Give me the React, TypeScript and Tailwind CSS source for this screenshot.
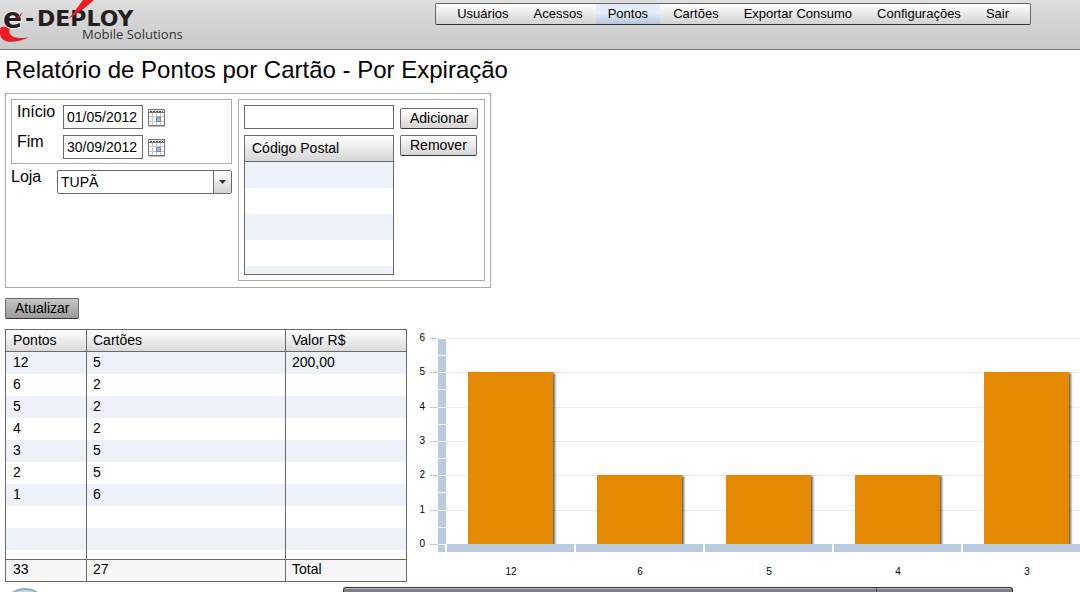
import React from 'react';

interface MenuItem {
  label: string;
  active?: boolean;
}

interface PointsRow {
  pontos: string;
  cartoes: string;
  valor: string;
}

const menuItems: MenuItem[] = [
  { label: 'Usuários' },
  { label: 'Acessos' },
  { label: 'Pontos', active: true },
  { label: 'Cartões' },
  { label: 'Exportar Consumo' },
  { label: 'Configurações' },
  { label: 'Sair' },
];

const rows: PointsRow[] = [
  { pontos: '12', cartoes: '5', valor: '200,00' },
  { pontos: '6', cartoes: '2', valor: '' },
  { pontos: '5', cartoes: '2', valor: '' },
  { pontos: '4', cartoes: '2', valor: '' },
  { pontos: '3', cartoes: '5', valor: '' },
  { pontos: '2', cartoes: '5', valor: '' },
  { pontos: '1', cartoes: '6', valor: '' },
  { pontos: '', cartoes: '', valor: '' },
  { pontos: '', cartoes: '', valor: '' },
];

const bars = [
  { label: '12', value: 5 },
  { label: '6', value: 2 },
  { label: '5', value: 2 },
  { label: '4', value: 2 },
  { label: '3', value: 5 },
];

const Logo: React.FC = () => (
  <svg width="190" height="49" viewBox="0 0 190 49" role="img" aria-label="e-Deploy Mobile Solutions">
    <path d="M1 27 C-1 32 0 37 3 39.5 C8 43.5 18 42 29 37.5 C20 38.5 12 38 10 34 C8.5 31 9.5 29 12 26 Z" fill="#ed1c24" />
    <text x="3" y="28" fontFamily="DejaVu Sans" fontWeight="bold" fontSize="28" fill="#231f20" stroke="#eee" strokeWidth="2" paintOrder="stroke">
      e
    </text>
    <path d="M15 19 L23 12 L20 17 Z" fill="#ed1c24" />
    <text x="25" y="26" fontFamily="DejaVu Sans" fontWeight="bold" fontSize="22" fill="#231f20">
      -
    </text>
    <text x="37" y="26" fontFamily="DejaVu Sans" fontWeight="bold" fontSize="22" fill="#231f20">
      DEPLOY
    </text>
    <path d="M83 0 L94 0 C86 7 80 12 68 19 C74 13 77 8 83 0 Z" fill="#ed1c24" />
    <text x="82" y="39" fontFamily="Open Sans" fontSize="13" fill="#333">
      Mobile Solutions
    </text>
  </svg>
);

const CalendarIcon: React.FC = () => (
  <svg width="19" height="20" viewBox="0 0 19 20" aria-hidden="true" shapeRendering="crispEdges">
    <rect x="2" y="18" width="16" height="1" fill="#bbb" />
    <rect x="1.5" y="1.5" width="16" height="16" fill="#fff" stroke="#777" />
    <path d="M2 8.5h15M2 13.5h15M5.5 5v12M9.5 5v12M13.5 5v12" stroke="#c8c8c8" fill="none" />
    <rect x="1.5" y="1.5" width="16" height="3" fill="#e4e4e4" stroke="#777" />
    <path d="M3 3h13" stroke="#444" strokeDasharray="2 1" />
    <rect x="9.5" y="9.5" width="4" height="4" fill="#9db9da" stroke="#6d8fb5" />
  </svg>
);

const DateField: React.FC<{ id: string; label: string; value: string }> = ({ id, label, value }) => (
  <div className="flex items-start">
    <label htmlFor={id} className="w-[46px] text-base leading-[14px]">
      {label}
    </label>
    <input
      id={id}
      type="text"
      defaultValue={value}
      className="h-6 w-20 border border-[#696969] bg-white px-[3px] text-sm"
    />
    <button type="button" aria-label={`Calendário ${label}`} className="ml-1 mt-[3px]">
      <CalendarIcon />
    </button>
  </div>
);

const FlexButton: React.FC<{ children: React.ReactNode; dark?: boolean }> = ({ children, dark }) => (
  <button
    type="button"
    className={`h-[21px] rounded-[2px] border border-[#6b6b6b] border-b-[#333] px-[9px] text-sm leading-[19px] ${
      dark ? 'bg-linear-to-b from-[#c6c6c6] to-[#9b9b9b]' : 'bg-linear-to-b from-white to-[#d4d4d4]'
    }`}
  >
    {children}
  </button>
);

const BAND = 129;
const STEP = 34.35;
const BASE = 215;

const BarChart: React.FC = () => (
  <svg className="block h-[253px] w-full" role="img" aria-label="Cartões por pontos" fontFamily="Liberation Sans, sans-serif" fontSize="10">
    <defs>
      <filter id="bar-shadow" x="-5%" y="-5%" width="115%" height="110%">
        <feDropShadow dx="2" dy="1" stdDeviation="1" floodColor="#000" floodOpacity="0.6" />
      </filter>
      <clipPath id="plot">
        <rect x="0" y="0" width="100%" height={BASE} />
      </clipPath>
    </defs>
    {[0, 1, 2, 3, 4, 5, 6].map((n) => {
      const y = Math.round(BASE - n * STEP);
      return (
        <g key={n}>
          <rect x="39" y={y} width="100%" height="1" fill="#ededed" />
          <rect x="23" y={y} width="8" height="1" fill="#b9cbdc" />
          <text x="18" y={y + 3} textAnchor="end">
            {n}
          </text>
        </g>
      );
    })}
    <rect x="31" y="10" width="8" height="213" fill="#b9cbdc" />
    {Array.from({ length: 12 }, (_, i) => (
      <rect key={i} x="31" y={Math.round(BASE - (i * STEP) / 2)} width="8" height="1" fill="#fff" />
    ))}
    <g clipPath="url(#plot)">
      {bars.map((bar, i) => (
        <rect
          key={bar.label}
          x={61 + i * BAND}
          y={Math.round(BASE - bar.value * STEP)}
          width="85"
          height={Math.round(bar.value * STEP) + 4}
          fill="#e48900"
          filter="url(#bar-shadow)"
        />
      ))}
    </g>
    <rect x="38" y={BASE} width="2" height="8" fill="#fff" />
    {bars.map((bar, i) => (
      <g key={bar.label}>
        <rect x={40 + i * BAND} y={BASE} width={BAND - 2} height="8" fill="#b9cbdc" />
        <text x={104 + i * BAND} y="246" textAnchor="middle">
          {bar.label}
        </text>
      </g>
    ))}
  </svg>
);

const App: React.FC = () => {
  return (
    <div className="flex min-h-screen flex-col overflow-hidden bg-white font-['Liberation_Sans',Arial,sans-serif] text-black">
      <header className="flex h-[50px] items-start justify-between border-b border-[#777] bg-linear-to-b from-[#dedede] to-[#c9c9c9]">
        <Logo />
        <nav className="mr-[49px] mt-[3px] flex h-[22px] gap-px rounded-[2px] border border-[#666] border-b-[#333] bg-linear-to-b from-white to-[#d2d2d2] px-[9px]">
          {menuItems.map((item) => (
            <a
              key={item.label}
              href="#"
              className={`px-3 text-[13px] leading-5 whitespace-nowrap ${
                item.active ? 'bg-linear-to-b from-[#e3ecf8] from-45% to-[#b5c6db]' : ''
              }`}
            >
              {item.label}
            </a>
          ))}
        </nav>
      </header>

      <main className="pl-[5px]">
        <h1 className="pt-[5px] text-2xl leading-[30px]">Relatório de Pontos por Cartão - Por Expiração</h1>

        <section className="mt-2 flex w-[486px] items-start gap-[6px] border border-[#aaa] p-[5px] pb-[6px]">
          <div className="flex w-[221px] flex-col gap-[6px]">
            <div className="flex flex-col gap-[6px] border border-[#aaa] p-[5px] pb-1">
              <DateField id="inicio" label="Início" value="01/05/2012" />
              <DateField id="fim" label="Fim" value="30/09/2012" />
            </div>
            <div className="flex items-start">
              <label htmlFor="loja" className="w-[46px] text-base leading-[14px]">
                Loja
              </label>
              <div className="relative flex-1">
                <select id="loja" className="block h-6 w-full appearance-none rounded-[2px] border border-[#696969] bg-white pl-[3px] text-sm">
                  <option>TUPÃ</option>
                </select>
                <span className="pointer-events-none absolute inset-y-px right-px flex w-[18px] items-center justify-center border-l border-[#696969] bg-linear-to-b from-white to-[#d4d4d4]">
                  <svg width="7" height="4" viewBox="0 0 7 4" aria-hidden="true">
                    <path d="M0 0h7L3.5 4z" fill="#333" />
                  </svg>
                </span>
              </div>
            </div>
          </div>

          <div className="flex flex-1 flex-col gap-[6px] border border-[#aaa] p-[5px]">
            <div className="flex items-end gap-[6px]">
              <input type="text" aria-label="Código Postal" className="h-6 w-[150px] border border-[#696969] bg-white px-1 text-sm" />
              <FlexButton>Adicionar</FlexButton>
            </div>
            <div className="flex items-start gap-[6px]">
              <div className="h-[140px] w-[150px] overflow-hidden border border-[#696969]">
                <table className="w-full border-separate border-spacing-0 text-sm">
                  <thead>
                    <tr className="bg-linear-to-b from-white to-[#d4d4d4]">
                      <th className="h-[26px] border-b border-[#696969] px-[7px] pt-0 pb-[2px] text-left font-normal">Código Postal</th>
                    </tr>
                  </thead>
                  <tbody>
                    {[0, 1, 2, 3, 4].map((n) => (
                      <tr key={n} className="odd:bg-[#edf2fa]">
                        <td className="h-[26px] p-0"></td>
                      </tr>
                    ))}
                  </tbody>
                </table>
              </div>
              <FlexButton>Remover</FlexButton>
            </div>
          </div>
        </section>

        <div className="mt-[10px] flex">
          <FlexButton dark>Atualizar</FlexButton>
        </div>

        <section className="mt-[10px] flex items-start">
          <table className="w-[402px] shrink-0 table-fixed border-separate border-spacing-0 border border-[#696969] text-sm leading-[18px]">
            <thead>
              <tr className="bg-linear-to-b from-white to-[#d8d8d8]">
                <th className="h-[22px] w-[81px] border-r border-b border-[#696969] px-[7px] pt-0 pb-[2px] text-left font-normal">Pontos</th>
                <th className="w-[199px] border-r border-b border-[#696969] px-[6px] pt-0 pb-[2px] text-left font-normal">Cartões</th>
                <th className="border-b border-[#696969] px-[6px] pt-0 pb-[2px] text-left font-normal">Valor R$</th>
              </tr>
            </thead>
            <tbody>
              {rows.map((row, i) => (
                <tr key={i} className="odd:bg-[#edf2fa]">
                  <td className="h-[22px] border-r border-[#696969] px-[7px] pt-0 pb-[2px]">{row.pontos}</td>
                  <td className="border-r border-[#696969] px-[6px] pt-0 pb-[2px]">{row.cartoes}</td>
                  <td className="px-[6px] pt-0 pb-[2px]">{row.valor}</td>
                </tr>
              ))}
              <tr>
                <td className="h-[9px] border-r border-[#696969] p-0"></td>
                <td className="border-r border-[#696969] p-0"></td>
                <td className="p-0"></td>
              </tr>
            </tbody>
            <tfoot>
              <tr className="bg-[#f7f7f7]">
                <td className="h-[22px] border-t border-r border-[#696969] px-[7px] pt-0 pb-[3px]">33</td>
                <td className="border-t border-r border-[#696969] px-[6px] pt-0 pb-[3px]">27</td>
                <td className="border-t border-[#696969] px-[6px] pt-0 pb-[3px]">Total</td>
              </tr>
            </tfoot>
          </table>
          <div className="min-w-0 flex-1">
            <BarChart />
          </div>
        </section>
      </main>

      <footer className="mt-auto flex items-end">
        <svg className="ml-[10px]" width="30" height="5" viewBox="0 0 30 5" aria-hidden="true">
          <circle cx="15" cy="24" r="22" fill="#c3d7e6" stroke="#8fb0c8" strokeWidth="2" />
        </svg>
        <div className="mr-[67px] ml-[303px] flex h-[5px] flex-1 rounded-t-[3px] border-x border-t border-[#333] bg-linear-to-b from-[#b5b7bb] from-25% to-[#7d8088] to-25%">
          <span className="w-[533px] border-r border-[#55585e]"></span>
        </div>
      </footer>
    </div>
  );
};

export default App;
